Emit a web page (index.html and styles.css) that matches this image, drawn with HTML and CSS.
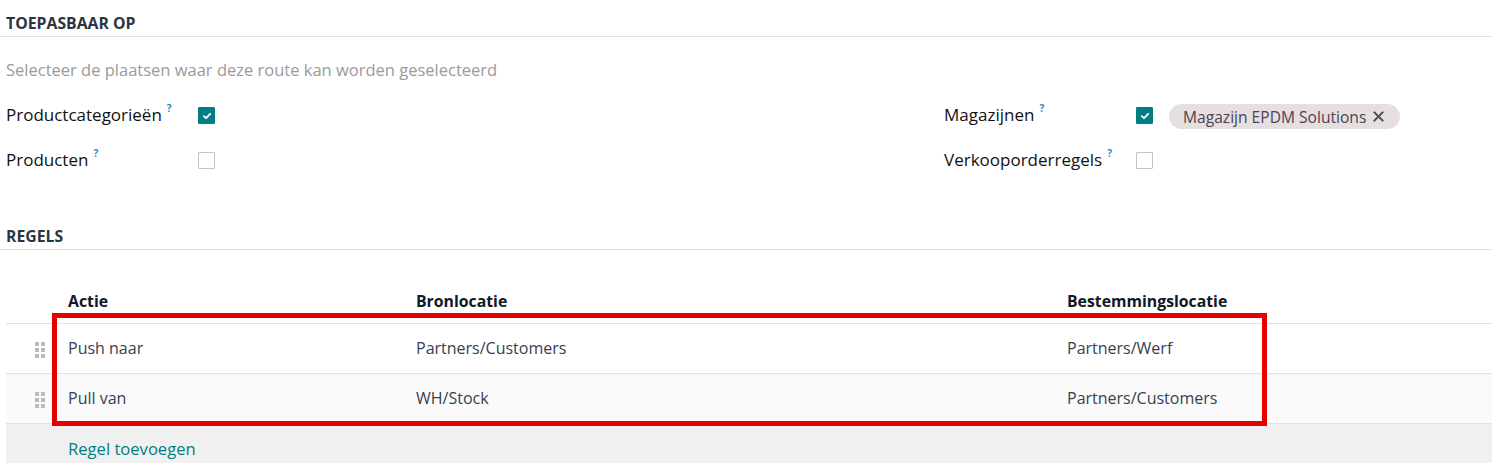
FILE: index.html
```html
<!DOCTYPE html>
<html lang="nl">
<head>
<meta charset="utf-8">
<title>Route</title>
<link rel="stylesheet" href="styles.css">
</head>
<body>
<div class="page">
  <section class="group">
    <h2 class="group-title">TOEPASBAAR OP</h2>
    <p class="hint">Selecteer de plaatsen waar deze route kan worden geselecteerd</p>
    <div class="fields">
      <div class="col">
        <div class="field">
          <label class="lbl">Productcategorieën<sup class="q">?</sup></label>
          <span class="cb checked"><svg viewBox="0 0 10 10" width="10" height="10"><path d="M1.8 5.2 L4 7.2 L8.2 2.8" fill="none" stroke="#fff" stroke-width="1.8" stroke-linecap="round" stroke-linejoin="round"/></svg></span>
        </div>
        <div class="field">
          <label class="lbl">Producten<sup class="q">?</sup></label>
          <span class="cb"></span>
        </div>
      </div>
      <div class="col">
        <div class="field">
          <label class="lbl">Magazijnen<sup class="q">?</sup></label>
          <span class="cb checked"><svg viewBox="0 0 10 10" width="10" height="10"><path d="M1.8 5.2 L4 7.2 L8.2 2.8" fill="none" stroke="#fff" stroke-width="1.8" stroke-linecap="round" stroke-linejoin="round"/></svg></span>
          <span class="tag">Magazijn EPDM Solutions <svg class="x" viewBox="0 0 12 12" width="11" height="11"><path d="M1.5 1.5 L10.5 10.5 M10.5 1.5 L1.5 10.5" stroke="#4a4f57" stroke-width="2.3" stroke-linecap="round"/></svg></span>
        </div>
        <div class="field">
          <label class="lbl">Verkooporderregels<sup class="q">?</sup></label>
          <span class="cb"></span>
        </div>
      </div>
    </div>
  </section>

  <section class="group rules">
    <h2 class="group-title">REGELS</h2>
    <div class="table-wrap">
      <table class="list">
        <colgroup>
          <col class="c-handle"><col class="c-action"><col class="c-src"><col>
        </colgroup>
        <thead>
          <tr><th></th><th>Actie</th><th>Bronlocatie</th><th>Bestemmingslocatie</th></tr>
        </thead>
        <tbody>
          <tr><td class="handle"><span class="grip"><i></i><i></i><i></i><i></i><i></i><i></i></span></td><td>Push naar</td><td>Partners/Customers</td><td>Partners/Werf</td></tr>
          <tr class="alt"><td class="handle"><span class="grip"><i></i><i></i><i></i><i></i><i></i><i></i></span></td><td>Pull van</td><td>WH/Stock</td><td>Partners/Customers</td></tr>
          <tr class="add"><td></td><td colspan="3"><a class="add-link">Regel toevoegen</a></td></tr>
        </tbody>
      </table>
      <div class="highlight"></div>
    </div>
  </section>
</div>
</body>
</html>
```

FILE: styles.css
```css
* { box-sizing: border-box; }
html, body { margin: 0; padding: 0; background: #fff; }
body {
  font-family: "Open Sans", "Noto Sans", sans-serif;
  font-size: 16px;
  color: #374151;
  overflow: hidden;
}
.page { width: 1492px; }

.group-title {
  margin: 0;
  padding: 15px 0 5px 6px;
  font-size: 15.8px;
  font-weight: 700;
  color: #2b3442;
  line-height: 16px;
  border-bottom: 1px solid #dee2e6;
}
.hint {
  margin: 0;
  padding: 22px 0 0 6px;
  font-size: 16.5px;
  line-height: 22px;
  color: #9a9a9a;
}
.fields {
  display: grid;
  grid-template-columns: 938px 1fr;
  padding: 12px 0 0 6px;
}
.field {
  display: flex;
  align-items: center;
  height: 45px;
}
.lbl {
  width: 192px;
  font-size: 17px;
  font-weight: 500;
  color: #111111;
  position: relative;
  top: -1px;
}
.q {
  color: #1f8fc9;
  font-size: 10px;
  font-weight: 700;
  margin-left: 5px;
  vertical-align: 9px;
  line-height: 0;
}
.cb {
  width: 17px;
  height: 17px;
  border: 1px solid #c4c4c4;
  border-radius: 1px;
  display: inline-flex;
  align-items: center;
  justify-content: center;
  background: #fff;
}
.cb.checked { background: #017e84; border-color: #017e84; }
.tag {
  margin-left: 16px;
  height: 25px;
  padding: 0 16px 0 14px;
  border-radius: 13px;
  background: #e6dfdf;
  color: #4d4353;
  font-size: 15.6px;
  display: inline-flex;
  align-items: center;
  gap: 7px;
  position: relative;
  top: 1px;
}
.tag .x { display: block; }

.rules .group-title { padding-top: 45px; }
.table-wrap { position: relative; margin: 39px 0 0 6px; }
.list {
  width: 100%;
  border-collapse: collapse;
  table-layout: fixed;
}
.c-handle { width: 54px; }
.c-action { width: 348px; }
.c-src { width: 651px; }
.list th {
  text-align: left;
  font-weight: 700;
  color: #111827;
  font-size: 15.8px;
  padding: 0 8px 10px;
  height: 34px;
  border-bottom: 1px solid #dee2e6;
}
.list td {
  height: 50px;
  padding: 0 8px;
  border-bottom: 1px solid #dee2e6;
  font-size: 16px;
  color: #374151;
}
.list tr.alt td { background: #fafafa; }
.list tr.add td { background: #f0f0f0; border-bottom: 0; height: 48px; padding-top: 2px; }
.add-link { color: #017e84; font-size: 16.6px; }
.handle { text-align: right; }
.grip {
  display: inline-grid;
  grid-template-columns: 4px 4px;
  gap: 2px;
  margin-right: 7px;
  vertical-align: middle;
}
.grip i { width: 4px; height: 4px; background: #b8bcc1; display: block; }

.highlight {
  position: absolute;
  left: 46px;
  top: 24px;
  width: 1215px;
  height: 113px;
  border: 5px solid #e60000;
  pointer-events: none;
}
```
